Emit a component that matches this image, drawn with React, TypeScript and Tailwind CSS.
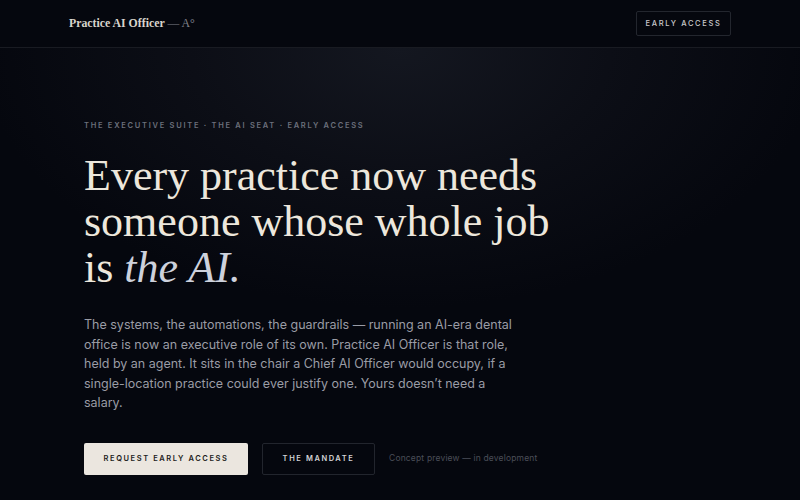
import React from "react";

export default function App() {
  const sans = { fontFamily: "Inter, 'DejaVu Sans', sans-serif" };
  const serif = { fontFamily: "'Liberation Serif', 'DejaVu Serif', serif" };
  return (
    <div className="w-[800px] h-[500px] overflow-hidden bg-[#05070e] text-white" style={sans}>
      <header className="h-[48px] border-b border-[#191b22] flex items-center justify-between px-[69px]">
        <div className="text-[11.8px] font-bold text-[#d9d5cd]" style={serif}>
          Practice AI Officer <span className="text-[#80828b] font-normal">— A°</span>
        </div>
        <button className="h-[25px] w-[95px] border border-[#23262e] rounded-[2px] text-[7.5px] tracking-[0.22em] text-[#c9c9cc] font-medium">
          EARLY ACCESS
        </button>
      </header>
      <main className="relative h-[452px] bg-[radial-gradient(ellipse_420px_260px_at_400px_0px,#141720_0%,#0c0e16_50%,#05070e_100%)] px-[84px] pt-[72px]">
        <div className="text-[7.5px] tracking-[0.23em] text-[#6c707c] font-semibold">
          THE EXECUTIVE SUITE · THE AI SEAT · EARLY ACCESS
        </div>
        <h1 className="mt-[22px] text-[44px] leading-[46px] font-normal text-[#ede7dc]" style={serif}>
          Every practice now needs
          <br />
          someone whose whole job
          <br />
          is <em className="italic text-[#cdd1dc]">the AI.</em>
        </h1>
        <p className="mt-[24px] w-[450px] text-[12.5px] leading-[19.5px] text-[#9a9ca5]">
          The systems, the automations, the guardrails — running an AI-era dental office is now an executive role of its own. Practice AI Officer is that role, held by an agent. It sits in the chair a Chief AI Officer would occupy, if a single-location practice could ever justify one. Yours doesn’t need a
          <br />
          salary.
        </p>
        <div className="mt-[30px] flex items-center">
          <button className="h-[32px] w-[164px] bg-[#ebe6df] rounded-[2px] text-[#1b1c20] text-[7.5px] tracking-[0.21em] font-semibold">
            REQUEST EARLY ACCESS
          </button>
          <button className="ml-[14px] h-[32px] w-[113px] border border-[#22252d] rounded-[2px] text-[#d3d3d6] text-[7.5px] tracking-[0.21em] font-semibold">
            THE MANDATE
          </button>
          <span className="ml-[14px] text-[8.5px] text-[#4b4e58] tracking-[0.02em]">
            Concept preview — in development
          </span>
        </div>
      </main>
    </div>
  );
}
